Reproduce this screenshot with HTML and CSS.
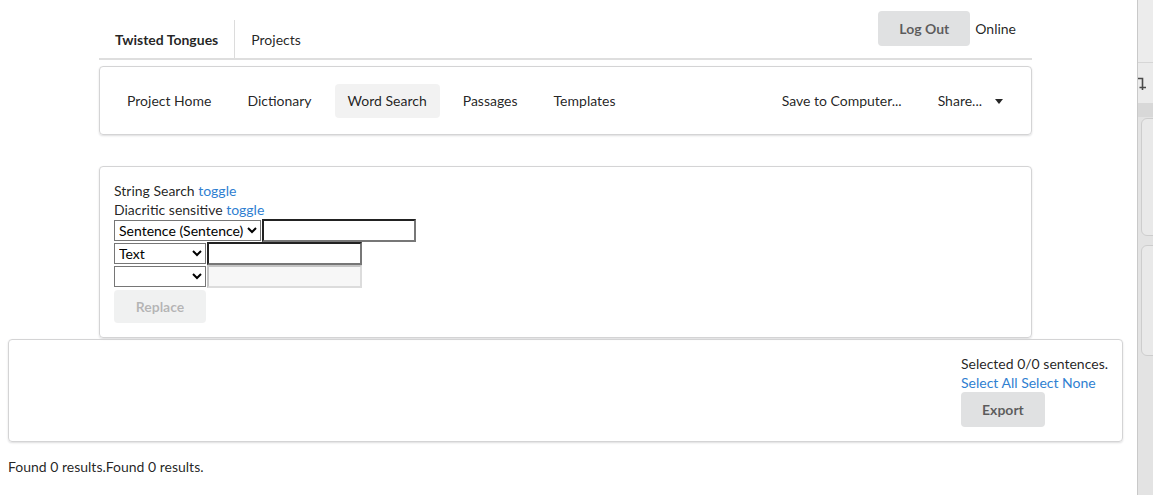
FILE: index.html
```html
<!DOCTYPE html>
<html lang="en">
<head>
<meta charset="utf-8">
<title>Twisted Tongues - Word Search</title>
<link rel="stylesheet" href="styles.css">
</head>
<body>
<div class="page">
  <main class="main">
    <div class="container">
      <header class="topnav">
        <a class="topitem brand">Twisted Tongues</a>
        <a class="topitem">Projects</a>
        <div class="topright">
          <button class="btn">Log Out</button>
          <span class="online">Online</span>
        </div>
      </header>

      <nav class="menucard">
        <a class="mitem">Project Home</a>
        <a class="mitem">Dictionary</a>
        <a class="mitem active">Word Search</a>
        <a class="mitem">Passages</a>
        <a class="mitem">Templates</a>
        <a class="mitem push">Save to Computer...</a>
        <a class="mitem">Share...<span class="caret"></span></a>
      </nav>

      <section class="searchcard">
        <div class="line">String Search <a class="link">toggle</a></div>
        <div class="line">Diacritic sensitive <a class="link">toggle</a></div>
        <div class="frow">
          <select class="sel sel-wide"><option>Sentence (Sentence)</option></select>
          <input class="inp inp-first" type="text">
        </div>
        <div class="frow">
          <select class="sel"><option>Text</option></select>
          <input class="inp" type="text">
        </div>
        <div class="frow">
          <select class="sel"><option></option></select>
          <input class="inp" type="text" disabled>
        </div>
        <button class="btn btn-disabled" disabled>Replace</button>
      </section>
    </div>

    <section class="results">
      <div class="selbox">
        <div class="line">Selected 0/0 sentences.</div>
        <div class="line"><a class="link">Select All</a> <a class="link">Select None</a></div>
        <button class="btn">Export</button>
      </div>
    </section>

    <p class="found">Found 0 results.Found 0 results.</p>
  </main>

  <aside class="sidepanel">
    <div class="sp-top"></div>
    <div class="sp-tool">
      <svg class="sp-icon" width="16" height="16" viewBox="0 0 16 16">
        <path d="M0 2.5 H4.5 V11.5 M1.5 11.5 H8 M4.5 11.5 V14" fill="none" stroke="#4a4a4a" stroke-width="1.6"/>
      </svg>
    </div>
    <div class="sp-band"></div>
    <div class="sp-cards">
      <div class="sp-card sp-card1"></div>
      <div class="sp-card sp-card2"></div>
    </div>
  </aside>
</div>
</body>
</html>
```

FILE: styles.css
```css
* { box-sizing: border-box; }

html, body {
  margin: 0;
  padding: 0;
  background: #fff;
}

body {
  font-family: Lato, "Open Sans", "Liberation Sans", sans-serif;
  font-size: 14px;
  line-height: 19px;
  color: rgba(0, 0, 0, 0.87);
}

.page {
  display: flex;
  min-height: 495px;
}

.main {
  flex: 1;
  min-width: 0;
  padding: 0 14px 0 8px;
}

.container {
  width: 933px;
  margin: 0 auto;
}

/* top navigation */
.topnav {
  display: flex;
  align-items: flex-start;
  border-bottom: 2px solid #dedede;
}

.topitem {
  margin-top: 20px;
  padding: 13px 17px 11px 16px;
  line-height: 14px;
  color: rgba(0, 0, 0, 0.87);
}

.brand {
  font-weight: 700;
  border-right: 1px solid #dcdcdc;
  padding-right: 16px;
}

.topright {
  margin-left: auto;
  margin-top: 11px;
  display: flex;
  align-items: center;
  padding-right: 16px;
}

.online {
  margin-left: 5px;
}

.btn {
  font-family: inherit;
  font-size: 14px;
  font-weight: 700;
  height: 35px;
  padding: 0 21px;
  line-height: 35px;
  border: none;
  border-radius: 4px;
  background: #e0e1e2;
  color: rgba(0, 0, 0, 0.6);
}

.btn-disabled {
  opacity: 0.45;
  height: 33px;
  line-height: 33px;
  margin-top: 2px;
  width: 92px;
  padding: 0;
}

/* secondary menu card */
.menucard {
  margin-top: 6px;
  display: flex;
  align-items: center;
  padding: 17px 10px 16px 9px;
  border: 1px solid #d4d4d5;
  border-radius: 4px;
  box-shadow: 0 1px 2px 0 rgba(34, 36, 38, 0.15);
}

.mitem {
  display: flex;
  align-items: center;
  margin: 0 5px;
  padding: 10px 13px;
  line-height: 14px;
  border-radius: 4px;
  color: rgba(0, 0, 0, 0.87);
}

.mitem.active {
  background: rgba(0, 0, 0, 0.05);
}

.mitem.push {
  margin-left: auto;
}

.caret {
  display: inline-block;
  margin-left: 13px;
  margin-top: 1px;
  border-left: 4px solid transparent;
  border-right: 4px solid transparent;
  border-top: 5px solid rgba(0, 0, 0, 0.85);
}

/* search card */
.searchcard {
  margin-top: 31px;
  padding: 14px;
  border: 1px solid #d4d4d5;
  border-radius: 4px;
  box-shadow: 0 1px 2px 0 rgba(34, 36, 38, 0.15);
}

.line {
  line-height: 19px;
}

.link {
  color: #2f80d1;
}

.frow {
  display: flex;
  align-items: center;
  gap: 1px;
  height: 23px;
}

.sel {
  font-family: inherit;
  font-size: 14px;
  width: 92px;
  height: 21px;
  margin: 0;
  color: #000;
  background: #fff;
  border: 1px solid #767676;
}

.sel-wide {
  width: 147px;
}

.inp {
  font-family: inherit;
  font-size: 14px;
  width: 155px;
  height: 23px;
  margin: 0;
  padding: 1px 2px;
  background: #fff;
  border-style: solid;
  border-width: 2px;
  border-color: #222 #777 #777 #222;
}

.inp-first {
  width: 154px;
}

.inp:disabled {
  background: #f7f7f7;
  border-color: #c4c4c4 #dcdcdc #dcdcdc #c4c4c4;
}

/* results */
.results {
  margin-top: 1px;
  display: flex;
  padding: 14px;
  border: 1px solid #d4d4d5;
  border-radius: 4px;
  box-shadow: 0 1px 2px 0 rgba(34, 36, 38, 0.15);
}

.selbox {
  margin-left: auto;
}

.found {
  margin: 15px 0 0;
}

/* right side panel */
.sidepanel {
  flex: 0 0 16px;
  width: 16px;
  overflow: hidden;
  display: flex;
  flex-direction: column;
  background: #e3e3e3;
  border-left: 1px solid #c9c9c9;
}

.sp-top {
  height: 63px;
  background: #ececec;
  border-bottom: 1px solid #d6d6d6;
}

.sp-tool {
  height: 40px;
  background: #ebebeb;
  padding-top: 13px;
}

.sp-icon {
  display: block;
}

.sp-band {
  height: 14px;
  background: #d8d8d8;
}

.sp-cards {
  display: flex;
  flex-direction: column;
  gap: 9px;
  padding: 1px 0 0 3px;
}

.sp-card {
  width: 30px;
  border: 1px solid #cdcdcd;
  border-radius: 6px;
  background: #e9e9e9;
}

.sp-card1 { height: 118px; }
.sp-card2 { height: 111px; }
```
